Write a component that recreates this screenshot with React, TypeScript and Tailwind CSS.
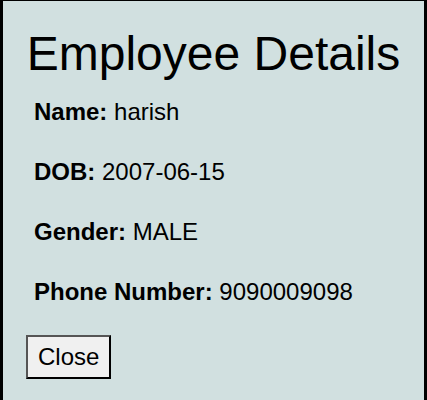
export default function App() {
  const employee = {
    name: 'harish',
    dob: '2007-06-15',
    gender: 'MALE',
    phone: '9090009098',
  }

  return (
    <div
      className="h-[400px] w-full overflow-hidden border-x-[3px] border-t border-black bg-[#d1e0e0] pl-[23px] pt-[25px] text-black"
      style={{ fontFamily: '"Liberation Sans", Arial, sans-serif' }}
    >
      <h1 className="-ml-[23px] text-center text-[48px] leading-[55px]">Employee Details</h1>

      <div className="mt-[17px] flex flex-col gap-[32px] pl-[8px] text-[24px] leading-[28px]">
        <p><strong>Name:</strong> {employee.name}</p>
        <p><strong>DOB:</strong> {employee.dob}</p>
        <p><strong>Gender:</strong> {employee.gender}</p>
        <p><strong>Phone Number:</strong> {employee.phone}</p>
      </div>

      <button className="mt-[29px] border-2 border-t-[#555] border-l-[#555] border-b-black border-r-black bg-[#f0f0f0] px-[10px] py-[6px] text-[24px] leading-[28px]">
        Close
      </button>
    </div>
  )
}
